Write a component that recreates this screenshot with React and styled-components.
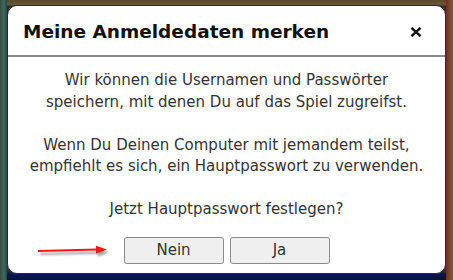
import React from "react";
import styled, { createGlobalStyle } from "styled-components";

const Global = createGlobalStyle`
  html, body { margin: 0; padding: 0; }
  body { font-family: "DejaVu Sans", Verdana, sans-serif; }
`;

const Scene = styled.div`
  position: relative;
  width: 453px;
  height: 280px;
  overflow: hidden;
  box-sizing: border-box;
  padding: 5px 7px 6px 7px;
  background:
    linear-gradient(90deg, #3d4a3a 0px, #2f6f6a 4px, #3b3f36 7px, transparent 7px, transparent 446px, #7a2a24 446px, #5f6b35 453px),
    linear-gradient(180deg, #5a4a2c 0px, #6b5634 5px, #2b2f28 6px, #2f3a2c 270px, #0b1850 274px, #07123d 280px);
`;

const Dialog = styled.div`
  width: 439px;
  height: 269px;
  box-sizing: border-box;
  background: #fff;
  border: 1px solid #2a2a2a;
  border-radius: 10px;
  display: flex;
  flex-direction: column;
  overflow: hidden;
`;

const Header = styled.div`
  height: 49px;
  display: flex;
  align-items: center;
  justify-content: space-between;
  padding: 0 23px 0 15px;
  border-bottom: 2px solid #888;
  flex-shrink: 0;
`;

const Title = styled.h1`
  margin: 0;
  font-family: "DejaVu Sans", Verdana, sans-serif;
  font-weight: bold;
  font-size: 18.5px;
  color: #111;
  padding-top: 1px;
`;

const Close = styled.button`
  border: 0;
  background: none;
  padding: 0;
  margin-top: 2px;
  width: 12px;
  height: 10px;
  display: flex;
  cursor: pointer;
`;

const Body = styled.div`
  flex: 1;
  display: flex;
  flex-direction: column;
  align-items: center;
  padding: 13px 0 0 0;
`;

const Message = styled.p`
  margin: 0;
  text-align: center;
  font-size: 15px;
  line-height: 21.5px;
  color: #333;
`;

const Buttons = styled.div`
  display: flex;
  gap: 6px;
  margin-top: 16px;
`;

const Button = styled.button`
  width: 100px;
  height: 27px;
  box-sizing: border-box;
  border: 1px solid #8a8a8a;
  border-radius: 3px;
  background: #efefef;
  font-family: "DejaVu Sans", Verdana, sans-serif;
  font-size: 15px;
  color: #333;
  padding: 0;
  cursor: pointer;
`;

const Arrow = styled.svg`
  position: absolute;
  left: 34px;
  top: 242px;
  overflow: visible;
`;

export default function App() {
  return (
    <>
      <Global />
      <Scene>
        <Dialog>
          <Header>
            <Title>Meine Anmeldedaten merken</Title>
            <Close aria-label="Schließen">
              <svg width="12" height="10" viewBox="0 0 12 10">
                <path d="M1.5 0.8 L10.5 9.2 M10.5 0.8 L1.5 9.2" stroke="#111" strokeWidth="2.4" strokeLinecap="butt" />
              </svg>
            </Close>
          </Header>
          <Body>
            <Message>
              Wir können die Usernamen und Passwörter
              <br />
              speichern, mit denen Du auf das Spiel zugreifst.
              <br />
              <br />
              Wenn Du Deinen Computer mit jemandem teilst,
              <br />
              empfiehlt es sich, ein Hauptpasswort zu verwenden.
              <br />
              <br />
              Jetzt Hauptpasswort festlegen?
            </Message>
            <Buttons>
              <Button>Nein</Button>
              <Button>Ja</Button>
            </Buttons>
          </Body>
        </Dialog>
        <Arrow width="80" height="16" viewBox="0 0 80 16">
          <defs>
            <filter id="sh" x="-20%" y="-100%" width="140%" height="300%">
              <feGaussianBlur stdDeviation="1.2" />
            </filter>
          </defs>
          <g filter="url(#sh)" opacity="0.55" transform="translate(2,3)">
            <path d="M4 9 L63 7.6" stroke="#555" strokeWidth="2.2" />
            <path d="M62 3.5 L73 7.5 L62 11.5 Z" fill="#555" />
          </g>
          <path d="M4 9 L63 7.6" stroke="#ff1414" strokeWidth="2" />
          <path d="M62 3.8 L73 7.6 L62 11.6 Z" fill="#ff1414" />
        </Arrow>
      </Scene>
    </>
  );
}
